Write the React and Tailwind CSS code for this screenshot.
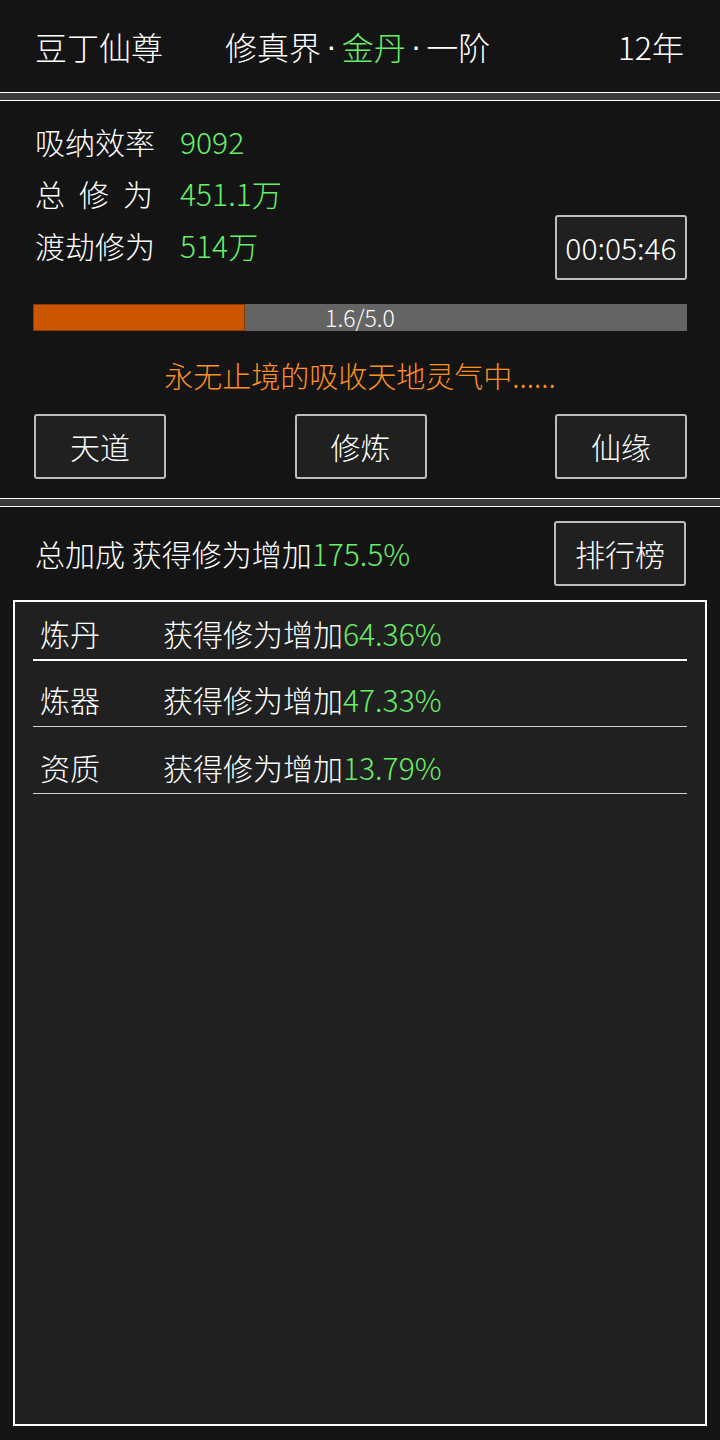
import React from "react";

const FONT = { fontFamily: '"Noto Sans CJK SC", "Noto Sans", sans-serif' };

const stats = [
  { label: "吸纳效率", value: "9092", spread: false },
  { label: "总修为", value: "451.1万", spread: true },
  { label: "渡劫修为", value: "514万", spread: false },
];

const bonuses = [
  { name: "炼丹", value: "64.36%", row: "h-[59px] pt-[6px]", line: "border-b-2 border-white" },
  { name: "炼器", value: "47.33%", row: "h-[66px] pt-[12px]", line: "border-b border-[#d0d0d0]" },
  { name: "资质", value: "13.79%", row: "h-[67px] pt-[14px]", line: "border-b border-[#d0d0d0]" },
];

function Separator() {
  return <div className="h-[9px] shrink-0 border-y border-white bg-[#3a3a3a]" />;
}

function Dot() {
  return <span className="mx-[5px] font-['Liberation_Sans']">·</span>;
}

function Btn({ children }) {
  return (
    <button className="flex h-[65px] w-[132px] items-center justify-center rounded-[3px] border-2 border-[#bdbdbd] bg-[#202020] text-[30px] font-light text-white">
      {children}
    </button>
  );
}

export default function App() {
  return (
    <div style={FONT} className="flex h-[1440px] w-[720px] flex-col bg-[#141414] font-light text-white">
      {/* header */}
      <div className="flex h-[92px] shrink-0 items-center pl-[35px] pr-[36px] text-[32px]">
        <span>豆丁仙尊</span>
        <span className="ml-[62px] flex items-center">
          修真界<Dot /><span className="text-[#66f066]">金丹</span><Dot />一阶
        </span>
        <span className="ml-auto">12年</span>
      </div>

      <Separator />

      {/* cultivation panel */}
      <div className="flex h-[397px] shrink-0 flex-col px-[33px] pt-[14px]">
        <div className="flex items-end justify-between">
          <div className="flex flex-col pl-[2px]">
            {stats.map((s) => (
              <div key={s.label} className="flex h-[52px] items-center text-[30px]">
                {s.spread ? (
                  <span className="flex w-[118px] justify-between">
                    {s.label.split("").map((c) => (
                      <span key={c}>{c}</span>
                    ))}
                  </span>
                ) : (
                  <span className="w-[118px] whitespace-nowrap">{s.label}</span>
                )}
                <span className="ml-[27px] text-[#66f066]">{s.value}</span>
              </div>
            ))}
          </div>
          <div className="mb-[-9px] flex h-[65px] w-[132px] items-center justify-center rounded-[3px] border-2 border-[#bdbdbd] bg-[#202020] text-[30px]">
            00:05:46
          </div>
        </div>

        <div className="relative mt-[33px] flex h-[27px] items-center bg-[#646464]">
          <div className="h-full w-[212px] border border-[#8a3a00] bg-[#cc5500]" />
          <span className="absolute inset-0 flex items-center justify-center text-[23px] leading-none">1.6/5.0</span>
        </div>

        <div className="mt-[26px] text-center text-[29px] leading-[36px] text-[#ff8f1f]">
          永无止境的吸收天地灵气中......
        </div>

        <div className="mt-[21px] flex justify-between pl-[1px]">
          <Btn>天道</Btn>
          <Btn>修炼</Btn>
          <Btn>仙缘</Btn>
        </div>
      </div>

      <Separator />

      {/* bonus panel */}
      <div className="flex flex-1 flex-col pb-[14px]">
        <div className="flex items-center justify-between pl-[35px] pr-[34px] pt-[14px]">
          <span className="text-[30px]">
            总加成 获得修为增加<span className="text-[#66f066]">175.5%</span>
          </span>
          <Btn>排行榜</Btn>
        </div>

        <div className="mx-[13px] mt-[14px] flex-1 border-2 border-white bg-[#202020] px-[18px]">
          {bonuses.map((b) => (
            <div key={b.name} className={`flex items-center text-[30px] ${b.row} ${b.line}`}>
              <span className="w-[130px] pl-[7px]">{b.name}</span>
              <span>
                获得修为增加<span className="text-[#66f066]">{b.value}</span>
              </span>
            </div>
          ))}
        </div>
      </div>
    </div>
  );
}
